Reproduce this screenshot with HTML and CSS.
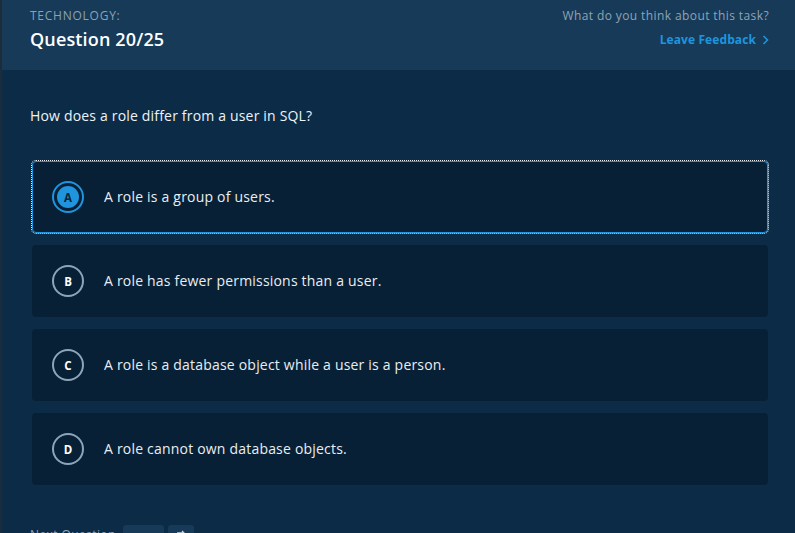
FILE: index.html
```html
<!DOCTYPE html>
<html>
<head>
<meta charset="utf-8">
<link rel="stylesheet" href="styles.css">
</head>
<body>
<div class="page">
  <header class="top">
    <div class="top-left">
      <div class="category">TECHNOLOGY:</div>
      <div class="qnum">Question 20/25</div>
    </div>
    <div class="top-right">
      <div class="ask">What do you think about this task?</div>
      <a class="feedback">Leave Feedback <svg class="chev" width="7" height="10" viewBox="0 0 7 10"><path d="M1.5 1 L5.5 5 L1.5 9" fill="none" stroke="currentColor" stroke-width="1.6"/></svg></a>
    </div>
  </header>
  <main class="content">
    <p class="question">How does a role differ from a user in SQL?</p>
    <div class="answers">
      <div class="answer selected"><span class="badge"><span class="dot">A</span></span><span class="atext">A role is a group of users.</span></div>
      <div class="answer"><span class="badge"><span class="dot">B</span></span><span class="atext">A role has fewer permissions than a user.</span></div>
      <div class="answer"><span class="badge"><span class="dot">C</span></span><span class="atext">A role is a database object while a user is a person.</span></div>
      <div class="answer"><span class="badge"><span class="dot">D</span></span><span class="atext">A role cannot own database objects.</span></div>
    </div>
    <div class="footer">
      <span class="next">Next Question</span>
      <span class="btn wide"></span>
      <span class="btn small"><svg width="10" height="10" viewBox="0 0 10 10"><path d="M1 3 L8 3 L6 1" fill="none" stroke="#c9d5df" stroke-width="1.3"/></svg></span>
    </div>
  </main>
</div>
</body>
</html>
```
FILE: styles.css
```css
html, body {
  margin: 0;
  padding: 0;
  height: 100%;
  overflow: hidden;
  background: #0b2b47;
  font-family: "Open Sans", "Noto Sans", sans-serif;
}
.page {
  border-left: 2px solid #1c2c3a;
  min-height: 100%;
  background: #0b2b47;
}
.top {
  height: 70px;
  background: #163a58;
  display: flex;
  justify-content: space-between;
  padding: 0 26px 0 28px;
  box-sizing: border-box;
}
.category {
  margin-top: 8px;
  font-size: 12px;
  line-height: 16px;
  letter-spacing: 0.75px;
  color: #8aa2b5;
}
.qnum {
  margin-top: 5px;
  font-size: 18px;
  line-height: 21px;
  font-weight: 600;
  letter-spacing: 0.15px;
  color: #ffffff;
}
.top-right {
  text-align: right;
}
.ask {
  margin-top: 8px;
  font-size: 12px;
  line-height: 16px;
  letter-spacing: 0.4px;
  color: #8ea4b6;
}
.feedback {
  display: inline-flex;
  align-items: center;
  gap: 6px;
  margin-top: 8px;
  font-size: 12px;
  line-height: 16px;
  font-weight: 700;
  letter-spacing: 0.1px;
  color: #1e95de;
}
.content {
  padding: 0 27px 0 28px;
}
.question {
  margin: 0;
  padding-top: 36px;
  font-size: 14px;
  line-height: 20px;
  letter-spacing: 0.18px;
  color: #eef3f7;
}
.answers {
  margin-top: 35px;
  padding-left: 2px;
  display: flex;
  flex-direction: column;
  gap: 12px;
}
.answer {
  height: 72px;
  box-sizing: border-box;
  background: #082035;
  border-radius: 4px;
  display: flex;
  align-items: center;
  padding-left: 20px;
}
.answer.selected {
  border: 1px solid #2196e0;
  outline: 1px dotted #e8eef3;
  padding-left: 19px;
}
.badge {
  width: 32px;
  height: 32px;
  box-sizing: border-box;
  border: 2px solid #8ca5b8;
  border-radius: 50%;
  display: flex;
  align-items: center;
  justify-content: center;
  flex: none;
}
.dot {
  width: 22px;
  height: 22px;
  border-radius: 50%;
  display: flex;
  align-items: center;
  justify-content: center;
  font-size: 11.5px;
  font-weight: 700;
  color: #ffffff;
}
.selected .badge {
  border-color: #1e95de;
}
.selected .dot {
  background: #1e95de;
  color: #0a2236;
}
.atext {
  margin-left: 20px;
  margin-top: -1px;
  font-size: 14px;
  letter-spacing: 0.2px;
  color: #e9eef3;
}
.footer {
  margin-top: 40px;
  display: flex;
  align-items: flex-start;
  height: 30px;
}
.next {
  margin-top: 1px;
  font-size: 12px;
  letter-spacing: 0.4px;
  color: #8ea4b6;
  width: 93px;
}
.btn {
  height: 28px;
  border-radius: 3px;
  background: #163a58;
  display: inline-flex;
  justify-content: center;
  padding-top: 5px;
  box-sizing: border-box;
}
.btn.wide { width: 41px; }
.btn.small { width: 26px; margin-left: 4px; }
```
